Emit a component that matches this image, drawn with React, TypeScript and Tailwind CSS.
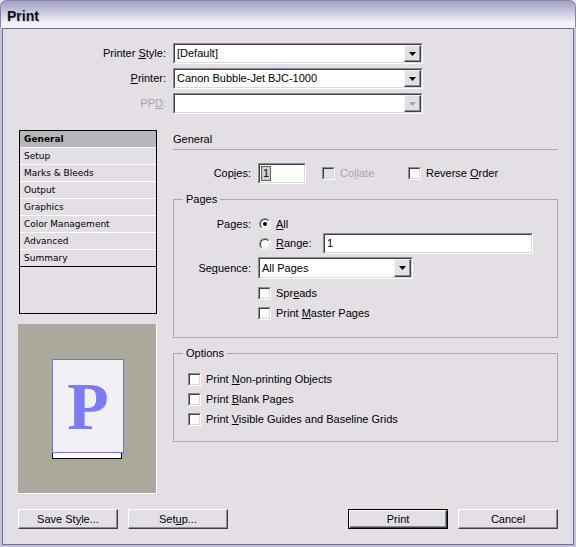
import React from "react";

const F = "font-['Liberation_Sans',Arial,sans-serif]";

function U({ children }: { children: React.ReactNode }) {
  return <span className="underline underline-offset-[1px]">{children}</span>;
}

function Arrow({ disabled }: { disabled?: boolean }) {
  return (
    <div className="w-[17px] h-full border border-t-[#f4f2f6] border-l-[#f4f2f6] border-b-[#404040] border-r-[#404040] shadow-[inset_-1px_-1px_0_#8e8c99] bg-[#e3dfe5] flex items-center justify-center">
      <svg width="7" height="4" viewBox="0 0 7 4">
        <path d="M0 0H7L3.5 4Z" fill={disabled ? "#a8a6ae" : "#000"} />
      </svg>
    </div>
  );
}

function Sunken({ className, children, bg }: { className: string; children?: React.ReactNode; bg?: string }) {
  return (
    <div className={`border border-t-[#8e8c99] border-l-[#8e8c99] border-b-white border-r-white ${className}`}>
      <div className={`h-full flex border border-t-[#404040] border-l-[#404040] border-b-[#dcd8e0] border-r-[#dcd8e0] ${bg ?? "bg-white"}`}>
        {children}
      </div>
    </div>
  );
}

function Combo({ text, className, disabled }: { text?: string; className: string; disabled?: boolean }) {
  return (
    <Sunken className={className}>
      <span className="flex-1 pl-[2px] self-center whitespace-nowrap overflow-hidden">{text}</span>
      <Arrow disabled={disabled} />
    </Sunken>
  );
}

function Check({ disabled }: { disabled?: boolean }) {
  return (
    <div className="w-[13px] h-[13px] shrink-0 border border-t-[#8e8c99] border-l-[#8e8c99] border-b-white border-r-white">
      <div
        className={`w-full h-full border border-t-[#404040] border-l-[#404040] border-b-[#dcd8e0] border-r-[#dcd8e0] ${
          disabled ? "bg-[#e3dfe5]" : "bg-[#fbfbf7]"
        }`}
      />
    </div>
  );
}

function Radio({ checked }: { checked?: boolean }) {
  return (
    <div className="w-[12px] h-[12px] shrink-0 rounded-full border border-t-[#8e8c99] border-l-[#8e8c99] border-b-white border-r-white">
      <div className="w-full h-full rounded-full border border-t-[#404040] border-l-[#404040] border-b-[#dcd8e0] border-r-[#dcd8e0] bg-[#fbfbf7] flex items-center justify-center">
        {checked && <div className="w-[4px] h-[4px] rounded-full bg-black" />}
      </div>
    </div>
  );
}

function Btn({ children, def }: { children: React.ReactNode; def?: boolean }) {
  return (
    <div className={`w-[100px] h-[20px] ${def ? "border border-black" : ""}`}>
      <div className="h-full border border-t-white border-l-white border-b-[#404040] border-r-[#404040] shadow-[inset_-1px_-1px_0_#8e8c99] bg-[#e3dfe5] flex items-center justify-center">
        {children}
      </div>
    </div>
  );
}

function TopRow({ label, text, disabled }: { label: React.ReactNode; text?: string; disabled?: boolean }) {
  return (
    <div className="flex items-center h-[21px]">
      <span className={`w-[163px] text-right ${disabled ? "text-[#a8a6ae]" : ""}`}>{label}</span>
      <Combo text={text} className="ml-[7px] w-[250px] h-[21px]" disabled={disabled} />
    </div>
  );
}

const items = ["General", "Setup", "Marks & Bleeds", "Output", "Graphics", "Color Management", "Advanced", "Summary"];

export default function App() {
  return (
    <div className={`w-[576px] h-[547px] flex flex-col bg-[#e3dfe5] ${F} text-[11px] leading-[13px] text-black`}>
      <div className="h-[28px] shrink-0 rounded-t-[7px] border-x border-t border-[#8583a5] bg-[linear-gradient(to_bottom,#a3a2c3_0%,#b9b8d2_25%,#dedded_60%,#f5f5f9_85%,#f0f0f5_100%)] pl-[6px] pt-[8px]">
        <span className="font-bold text-[14px] leading-[15px] text-[#10101a] [text-shadow:1px_1px_0_rgba(120,118,150,0.35)]">
          Print
        </span>
      </div>
      <div className="flex-1 border-x-[2px] border-b-[2px] border-[#c4c2d6]">
        <div className="h-full border border-[#6f6d91] flex flex-col">
          <div className="pt-[14px] flex flex-col gap-[4px]">
            <TopRow label={<>Printer <U>S</U>tyle:</>} text="[Default]" />
            <TopRow label={<><U>P</U>rinter:</>} text="Canon Bubble-Jet BJC-1000" />
            <TopRow label={<>PP<U>D</U>:</>} disabled />
          </div>

          <div className="mt-[16px] pl-[15px] flex">
            <div className="w-[139px] flex flex-col">
              <div className="ml-[1px] w-[138px] h-[184px] border border-black flex flex-col font-['DejaVu_Sans',Verdana,sans-serif] text-[9px]">
                {items.map((t, i) => (
                  <div
                    key={t}
                    className={`h-[17px] shrink-0 pl-[4px] flex items-center border-b ${
                      i === 0 ? "bg-[#b7b6ba] font-bold" : ""
                    } ${i === 7 ? "border-black" : "border-white"}`}
                  >
                    {t}
                  </div>
                ))}
              </div>
              <div className="mt-[10px] w-[139px] h-[170px] bg-[#aba99c] border-r border-b border-white flex items-center justify-center">
                <div className="relative w-[70px] h-[100px] bg-white border border-black">
                  <div className="absolute -left-px -top-px w-[72px] h-[94px] border border-[#7a6ff0] bg-[#f3f0f5] flex items-center justify-center">
                    <span className="font-['Liberation_Serif',serif] font-bold text-[68px] leading-none text-[#7b7bf7]">P</span>
                  </div>
                </div>
              </div>
            </div>

            <div className="ml-[16px] w-[385px] flex flex-col">
              <div className="h-[20px] border-b border-[#a9a7b1] pt-[3px]">General</div>
              <div className="mt-[13px] flex items-center h-[21px]">
                <span className="w-[78px] text-right">Cop<U>i</U>es:</span>
                <Sunken className="ml-[7px] w-[48px] h-[21px]" bg="bg-[#fafff7]">
                  <span className="ml-[2px] self-center px-px bg-[#d0d0d0] outline outline-1 outline-[#606060] leading-[13px]">1</span>
                </Sunken>
                <div className="ml-[16px] w-[86px] flex items-center">
                  <Check disabled />
                  <span className="ml-[5px] text-[#a8a6ae]">Co<U>l</U>late</span>
                </div>
                <Check />
                <span className="ml-[5px]">Reverse <U>O</U>rder</span>
              </div>

              <fieldset className="mt-[9px] border border-[#a9a7b1]">
                <legend className="ml-[9px] px-[3px]">Pages</legend>
                <div className="pt-[10px] pb-[16px] flex flex-col">
                  <div className="flex items-center h-[16px]">
                    <span className="w-[77px] text-right">Pages:</span>
                    <div className="ml-[8px]"><Radio checked /></div>
                    <span className="ml-[5px]"><U>A</U>ll</span>
                  </div>
                  <div className="mt-[1px] flex items-center h-[21px]">
                    <div className="w-[85px]" />
                    <div className="w-[64px] flex items-center">
                      <Radio />
                      <span className="ml-[5px]"><U>R</U>ange:</span>
                    </div>
                    <Sunken className="w-[210px] h-[21px]">
                      <span className="ml-[2px] self-center">1</span>
                    </Sunken>
                  </div>
                  <div className="mt-[3px] flex items-center h-[22px]">
                    <span className="w-[77px] text-right">Se<U>q</U>uence:</span>
                    <Combo text="All Pages" className="ml-[7px] w-[155px] h-[22px]" />
                  </div>
                  <div className="mt-[6px] flex items-center h-[16px]">
                    <div className="w-[84px]" />
                    <Check />
                    <span className="ml-[5px]">Spr<U>e</U>ads</span>
                  </div>
                  <div className="mt-[4px] flex items-center h-[16px]">
                    <div className="w-[84px]" />
                    <Check />
                    <span className="ml-[5px]">Print <U>M</U>aster Pages</span>
                  </div>
                </div>
              </fieldset>

              <fieldset className="mt-[9px] border border-[#a9a7b1]">
                <legend className="ml-[9px] px-[3px]">Options</legend>
                <div className="pt-[11px] pb-[14px] pl-[14px] flex flex-col gap-[4px]">
                  <div className="flex items-center h-[16px]">
                    <Check />
                    <span className="ml-[5px]">Print <U>N</U>on-printing Objects</span>
                  </div>
                  <div className="flex items-center h-[16px]">
                    <Check />
                    <span className="ml-[5px]">Print <U>B</U>lank Pages</span>
                  </div>
                  <div className="flex items-center h-[16px]">
                    <Check />
                    <span className="ml-[5px]">Print <U>V</U>isible Guides and Baseline Grids</span>
                  </div>
                </div>
              </fieldset>
            </div>
          </div>

          <div className="mt-[15px] pl-[15px] flex">
            <Btn>Save St<U>y</U>le...</Btn>
            <div className="ml-[10px]"><Btn>Set<U>u</U>p...</Btn></div>
            <div className="ml-[120px]"><Btn def>Print</Btn></div>
            <div className="ml-[10px]"><Btn>Cancel</Btn></div>
          </div>
        </div>
      </div>
    </div>
  );
}
